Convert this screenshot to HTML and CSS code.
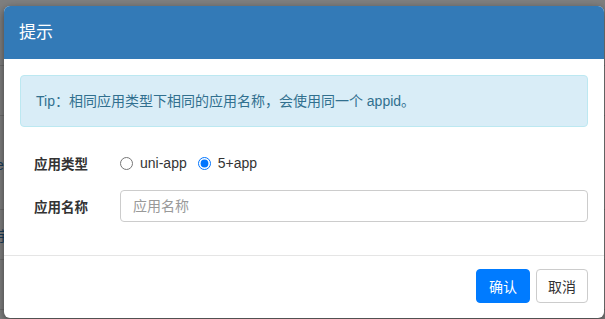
FILE: index.html
```html
<!DOCTYPE html>
<html lang="zh-CN">
<head>
<meta charset="utf-8">
<link rel="stylesheet" href="styles.css">
</head>
<body>
<div class="page">
  <div class="page-row"></div>
  <div class="page-row"></div>
  <div class="page-row"><span class="page-link">el</span></div>
  <div class="page-row"><span class="page-link">宇</span></div>
  <div class="page-row"></div>
</div>
<div class="backdrop"></div>
<div class="modal">
  <div class="modal-header">
    <h4 class="modal-title">提示</h4>
  </div>
  <div class="modal-body">
    <div class="alert">Tip：相同应用类型下相同的应用名称，会使用同一个 appid。</div>
    <div class="form-row">
      <label class="form-label">应用类型</label>
      <div class="form-control-wrap radios">
        <label class="radio"><input type="radio" name="t"><span>uni-app</span></label>
        <label class="radio"><input type="radio" name="t" checked><span>5+app</span></label>
      </div>
    </div>
    <div class="form-row">
      <label class="form-label">应用名称</label>
      <div class="form-control-wrap">
        <input class="text-input" type="text" placeholder="应用名称">
      </div>
    </div>
  </div>
  <div class="modal-footer">
    <button class="btn btn-primary">确认</button>
    <button class="btn btn-default">取消</button>
  </div>
</div>
</body>
</html>
```
FILE: styles.css
```css
* { box-sizing: border-box; }
html, body { margin: 0; padding: 0; }
body {
  width: 605px;
  height: 319px;
  overflow: hidden;
  background: #fff;
  font-family: "Liberation Sans", Arial, "Noto Sans CJK SC", sans-serif;
  font-size: 14px;
  color: #333;
  position: relative;
}
.page { padding-top: 16px; }
.page-row {
  height: 50px;
  border-bottom: 1px solid #ddd;
  display: flex;
  align-items: center;
}
.page-row:nth-child(3) { height: 94px; align-items: flex-end; padding-bottom: 36px; }
.page-link { color: #337ab7; font-size: 14px; margin-left: -4px; }
.backdrop {
  position: absolute;
  inset: 0;
  background: rgba(0, 0, 0, 0.5);
}
.modal {
  position: absolute;
  left: 4px;
  top: 6px;
  width: 600px;
  height: 312px;
  background: #fff;
  border-radius: 6px;
  overflow: hidden;
  box-shadow: 0 3px 9px rgba(0, 0, 0, 0.5);
  display: flex;
  flex-direction: column;
}
.modal-header {
  background: #337ab7;
  padding: 15px 15px;
  height: 53px;
}
.modal-title {
  margin: 0;
  color: #fff;
  font-size: 17px;
  font-weight: normal;
  line-height: 23px;
}
.modal-body {
  padding: 16px 16px 4px;
}
.alert {
  background: #d9edf7;
  border: 1px solid #bce8f1;
  color: #31708f;
  border-radius: 4px;
  padding: 15px 15px;
  line-height: 20px;
  height: 52px;
  margin-bottom: 20px;
}
.form-row {
  display: flex;
  align-items: center;
  height: 32px;
  margin-bottom: 11px;
}
.form-label {
  width: 100px;
  padding-left: 14px;
  font-weight: bold;
  color: #333;
  font-size: 13.5px;
}
.form-control-wrap { flex: 1; }
.radios { display: flex; align-items: center; gap: 11px; }
.radio { display: flex; align-items: center; color: #333; font-size: 14px; }
.radio input { margin: 0 7px 0 0; width: 13px; height: 13px; }
.text-input {
  width: 100%;
  height: 32px;
  border: 1px solid #ccc;
  border-radius: 4px;
  padding: 6px 12px;
  font-family: inherit;
  font-size: 14px;
  color: #555;
  background: #fff;
  outline: none;
}
.text-input::placeholder { color: #999; }
.modal-footer {
  margin-top: auto;
  border-top: 1px solid #e5e5e5;
  padding: 13px 16px 15px;
  display: flex;
  justify-content: flex-end;
  gap: 6px;
}
.btn {
  height: 34px;
  border-radius: 4px;
  font-family: inherit;
  font-size: 14px;
  padding: 0;
  white-space: nowrap;
  cursor: pointer;
}
.btn-primary { background: #007bff; border: 1px solid #007bff; color: #fff; width: 54px; }
.btn-default { background: #fff; border: 1px solid #ccc; color: #333; width: 52px; }
```
